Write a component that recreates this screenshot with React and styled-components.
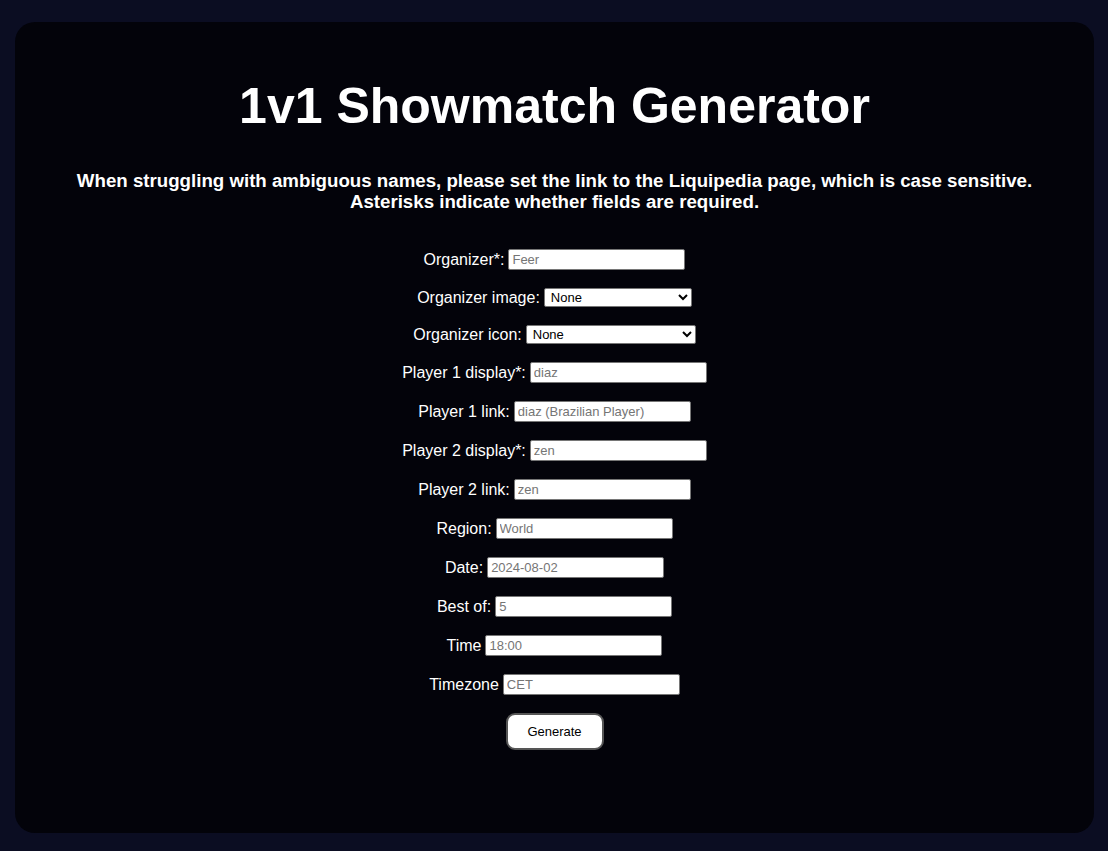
import React from 'react';
import styled, { createGlobalStyle } from 'styled-components';

const GlobalStyle = createGlobalStyle`
  html, body {
    margin: 0;
    padding: 0;
    background: #0b0d22;
    font-family: 'Liberation Sans', Arial, sans-serif;
  }
`;

const Page = styled.div`
  box-sizing: border-box;
  height: 851px;
  padding: 22px 14px 18px 15px;
`;

const Card = styled.main`
  box-sizing: border-box;
  height: 100%;
  background: #03030a;
  border-radius: 20px;
  padding-top: 55px;
  display: flex;
  flex-direction: column;
  align-items: center;
  color: #fff;
`;

const Title = styled.h1`
  margin: 0;
  font-size: 50px;
  font-weight: bold;
`;

const Subtitle = styled.h3`
  margin: 35px 0 0;
  font-size: 18.7px;
  font-weight: bold;
  text-align: center;
  line-height: 21px;
`;

const Form = styled.form`
  margin-top: 37px;
  display: flex;
  flex-direction: column;
  align-items: center;
  gap: 18px;
`;

const Row = styled.div`
  display: flex;
  align-items: center;
  gap: 4px;
  font-size: 16px;
  min-height: ${({ tall }) => (tall ? '21px' : '19px')};
`;

const Input = styled.input`
  box-sizing: border-box;
  width: 177px;
  height: 21px;
  padding: 1px 3px;
  border: 1px solid #767676;
  border-radius: 2px;
  background: #fff;
  font-family: 'Liberation Sans', Arial, sans-serif;
  font-size: 13px;
  color: #000;
  &::placeholder {
    color: #757575;
  }
`;

const Select = styled.select`
  box-sizing: border-box;
  width: ${({ w }) => w}px;
  height: 19px;
  padding: 0 2px;
  border: 1px solid #767676;
  border-radius: 2px;
  background: #fff;
  font-family: 'Liberation Sans', Arial, sans-serif;
  font-size: 13px;
  color: #000;
`;

const Button = styled.button`
  width: 98px;
  height: 37px;
  background: #fff;
  border: 2px solid #555;
  border-radius: 9px;
  font-family: 'Liberation Sans', Arial, sans-serif;
  font-size: 13px;
  color: #000;
  cursor: pointer;
`;

const fields = [
  { label: 'Organizer*:', placeholder: 'Feer' },
  { label: 'Organizer image:', select: 148 },
  { label: 'Organizer icon:', select: 170 },
  { label: 'Player 1 display*:', placeholder: 'diaz' },
  { label: 'Player 1 link:', placeholder: 'diaz (Brazilian Player)' },
  { label: 'Player 2 display*:', placeholder: 'zen' },
  { label: 'Player 2 link:', placeholder: 'zen' },
  { label: 'Region:', placeholder: 'World' },
  { label: 'Date:', placeholder: '2024-08-02' },
  { label: 'Best of:', placeholder: '5' },
  { label: 'Time', placeholder: '18:00' },
  { label: 'Timezone', placeholder: 'CET' },
];

export default function App() {
  return (
    <Page>
      <GlobalStyle />
      <Card>
        <Title>1v1 Showmatch Generator</Title>
        <Subtitle>
          When struggling with ambiguous names, please set the link to the Liquipedia page, which is case sensitive.
          <br />
          Asterisks indicate whether fields are required.
        </Subtitle>
        <Form onSubmit={(e) => e.preventDefault()}>
          {fields.map((f) => (
            <Row key={f.label} tall={!f.select}>
              <label>{f.label}</label>
              {f.select ? (
                <Select w={f.select} defaultValue="None">
                  <option>None</option>
                </Select>
              ) : (
                <Input type="text" placeholder={f.placeholder} />
              )}
            </Row>
          ))}
          <Button type="submit">Generate</Button>
        </Form>
      </Card>
    </Page>
  );
}
